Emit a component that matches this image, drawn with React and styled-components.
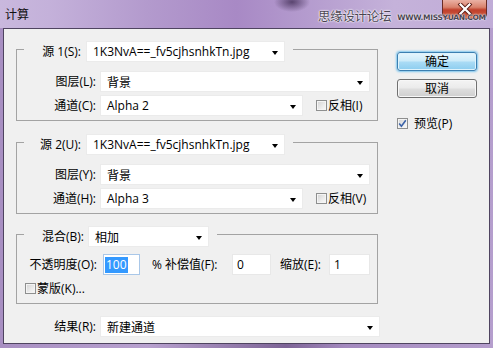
import React from 'react';
import styled, { createGlobalStyle } from 'styled-components';

const Global = createGlobalStyle`
  html, body { margin: 0; padding: 0; }
  body {
    width: 493px; height: 348px; overflow: hidden;
    font-family: "Open Sans", "Noto Sans CJK SC", sans-serif;
    font-size: 12px; color: #000;
  }
  * { box-sizing: border-box; }
`;

const Window = styled.div`
  width: 493px; height: 348px;
  display: flex; flex-direction: column;
  position: relative;
  background: linear-gradient(90deg, #a88fc2 0%, #b8a1cf 30%, #7d6496 58%, #a48abf 70%, #b59ecd 100%);
`;

const TitleBar = styled.header`
  height: 28px; flex: none;
  display: flex; align-items: flex-start;
  position: relative;
  background:
    radial-gradient(18px 10px at 292px 2px, rgba(60,40,80,0.75), rgba(60,40,80,0)),
    linear-gradient(90deg, #c9b8dd 0%, #c4b1da 10%, #b39acd 30%, #a889c5 48%, #b49bce 62%, #c5b2da 80%, #c0acd7 100%);
`;

const Title = styled.div`
  padding: 7px 0 0 5px;
  font-size: 12px; line-height: 16px;
  color: #111;
`;

const WindowControls = styled.div`
  margin-left: auto; margin-right: 6px;
  display: flex;
`;

const CloseBtn = styled.button`
  appearance: none;
  margin: 0; padding: 0;
  width: 45px; height: 19px;
  display: flex; align-items: center; justify-content: center;
  border: 1px solid #6a2c26;
  border-top: 0 none;
  border-radius: 0 0 5px 5px;
  background: #c94a36 linear-gradient(180deg, #eab1a4 0%, #d9826d 40%, #c0402c 55%, #cf5a3e 100%);
`;

const Watermark = styled.div`
  position: absolute; left: 318px; top: 8px;
  display: flex; align-items: center; gap: 6px;
  white-space: nowrap;
  pointer-events: none;
`;

const WatermarkCn = styled.span`
  font-family: "Noto Sans CJK SC", sans-serif;
  font-size: 12.5px; line-height: 16px; letter-spacing: -0.3px;
  color: #4a4452;
  text-shadow: 0 0 1px #fff, 0 0 2px #fff, 0 0 2px #fff;
`;

const WatermarkEn = styled.span`
  font-family: "DejaVu Sans", sans-serif;
  font-weight: bold; font-size: 7.5px; letter-spacing: -0.3px;
  color: #4a4452; margin-top: 2px;
  text-shadow: 0 0 1px #fff, 0 0 2px #fff;
`;

const Content = styled.div`
  flex: 1;
  margin: 0 3px 4px 3px;
  border: 1px solid #4f4460;
  background: #f0f0f0;
  display: flex; align-items: flex-start;
  padding: 20px 0 0 12px;
`;

const LeftCol = styled.div`
  width: 362px; display: flex; flex-direction: column;
`;

const RightCol = styled.div`
  width: 80px; margin-left: 19px; padding-top: 3px;
  display: flex; flex-direction: column;
`;

const Group = styled.div`
  border: 1px solid #a3a3a3;
  display: flex; flex-direction: column;
  padding-bottom: ${p => p.$pb}px;
  margin-top: ${p => p.$mt ?? 0}px;
`;

const GroupHeader = styled.div`
  align-self: flex-start;
  margin: -9px 0 0 7px;
  padding: 0 8px 0 12px;
  background: #f0f0f0;
  display: flex; align-items: center; gap: ${p => p.$gap}px;
  height: 21px;
`;

const Label = styled.span`
  width: ${p => p.$w}px;
  flex: none;
  margin-left: ${p => p.$ml ?? 0}px;
  text-align: ${p => p.$align ?? 'right'};
  white-space: nowrap;
  line-height: 16px;
`;

const Row = styled.div`
  display: flex; align-items: center;
  height: ${p => p.$h ?? 21}px;
  margin-top: ${p => p.$mt}px;
  padding-left: ${p => p.$pl ?? 0}px;
  gap: ${p => p.$gap ?? 4}px;
`;

const SelectBox = styled.div`
  width: ${p => p.$w}px; height: 21px; flex: none;
  background: #fff;
  border: 1px solid #ebebeb;
  display: flex; align-items: center; justify-content: space-between;
  padding: 0 6px 0 6px;
  white-space: nowrap;
`;

const Arrow = styled.span`
  width: 0; height: 0;
  border-left: 3.5px solid transparent;
  border-right: 3.5px solid transparent;
  border-top: 4px solid #000;
  margin-top: 2px;
`;

const Input = styled.div`
  width: ${p => p.$w}px; height: 21px; flex: none;
  margin-left: ${p => p.$ml}px;
  background: #fff;
  border: 1px solid ${p => (p.$focus ? '#a9c7e8' : '#e8e8e8')};
  display: flex; align-items: center;
  padding-left: ${p => (p.$focus ? 1 : 4)}px;
`;

const Selected = styled.span`
  background: #3399ff; color: #fff;
  padding: 0 1px; line-height: 16px;
`;

const CheckWrap = styled.label`
  display: flex; align-items: center; gap: ${p => p.$gap ?? 1}px;
  margin-left: ${p => p.$ml ?? 0}px;
  white-space: nowrap; line-height: 16px;
`;

const Box = styled.span`
  width: 11px; height: 11px; flex: none;
  border: 1px solid #8e8f8f;
  background: linear-gradient(135deg, #d2d2d2 0%, #ececec 60%, #fafafa 100%);
  box-shadow: inset 0 0 0 1px #f4f4f4;
  display: flex; align-items: center; justify-content: center;
`;

const Button = styled.div`
  width: 80px; height: 19px;
  margin-top: ${p => p.$mt ?? 0}px;
  border-radius: 3px;
  display: flex; align-items: center; justify-content: center;
  line-height: 16px;
  border: 1px solid ${p => (p.$primary ? '#3c7fb1' : '#707070')};
  background: ${p => (p.$primary
    ? 'linear-gradient(180deg, #e7f6fd 0%, #cdebf9 45%, #a9dbf5 55%, #8ccdef 100%)'
    : 'linear-gradient(180deg, #f4f4f4 0%, #ebebeb 45%, #dddddd 55%, #cfcfcf 100%)')};
  box-shadow: ${p => (p.$primary ? '0 0 2px 1px #7fc6ee, inset 0 0 0 1px #dff3fc' : 'inset 0 0 0 1px #f7f7f7')};
`;

function Select({ w, children }) {
  return (
    <SelectBox $w={w}>
      <span>{children}</span>
      <Arrow />
    </SelectBox>
  );
}

function Check({ checked, children, ml, gap }) {
  return (
    <CheckWrap $ml={ml} $gap={gap}>
      <Box>
        {checked && (
          <svg width="9" height="9" viewBox="0 0 9 9">
            <path d="M1.2 4.6 L3.4 7.2 L7.8 1.2" fill="none" stroke="#3a62a8" strokeWidth="1.6" />
          </svg>
        )}
      </Box>
      <span>{children}</span>
    </CheckWrap>
  );
}

export default function App() {
  return (
    <Window>
      <Global />
      <TitleBar>
        <Title>计算</Title>
        <WindowControls>
          <CloseBtn type="button" aria-label="关闭">
            <svg width="16" height="12" viewBox="0 0 16 12">
              <path d="M3.5 1.5 L12.5 10.5 M12.5 1.5 L3.5 10.5" stroke="#5a1d16" strokeWidth="4" strokeLinecap="square" />
              <path d="M3.5 1.5 L12.5 10.5 M12.5 1.5 L3.5 10.5" stroke="#ffffff" strokeWidth="2.2" strokeLinecap="square" />
            </svg>
          </CloseBtn>
        </WindowControls>
        <Watermark>
          <WatermarkCn>思缘设计论坛</WatermarkCn>
          <WatermarkEn>WWW.MISSYUAN.COM</WatermarkEn>
        </Watermark>
      </TitleBar>
      <Content>
        <LeftCol>
          <Group $pb={4}>
            <GroupHeader $gap={5}>
              <Label $w={45}>源 1(S):</Label>
              <Select w={199}>1K3NvA==_fv5cjhsnhkTn.jpg</Select>
            </GroupHeader>
            <Row $mt={9}>
              <Label $w={79}>图层(L):</Label>
              <Select w={270}>背景</Select>
            </Row>
            <Row $mt={3}>
              <Label $w={79}>通道(C):</Label>
              <Select w={203}>Alpha 2</Select>
              <Check ml={9}>反相(I)</Check>
            </Row>
          </Group>

          <Group $pb={4} $mt={21}>
            <GroupHeader $gap={5}>
              <Label $w={45}>源 2(U):</Label>
              <Select w={199}>1K3NvA==_fv5cjhsnhkTn.jpg</Select>
            </GroupHeader>
            <Row $mt={9}>
              <Label $w={79}>图层(Y):</Label>
              <Select w={270}>背景</Select>
            </Row>
            <Row $mt={3}>
              <Label $w={79}>通道(H):</Label>
              <Select w={203}>Alpha 3</Select>
              <Check ml={9}>反相(V)</Check>
            </Row>
          </Group>

          <Group $pb={7} $mt={20}>
            <GroupHeader $gap={4}>
              <Label $w={48}>混合(B):</Label>
              <Select w={121}>相加</Select>
            </GroupHeader>
            <Row $mt={7} $gap={0}>
              <Label $w={80}>不透明度(O):</Label>
              <Input $w={37} $ml={6} $focus><Selected>100</Selected></Input>
              <Label $w={13} $ml={12} $align="left">%</Label>
              <Label $w={61} $align="left">补偿值(F):</Label>
              <Input $w={39} $ml={6}>0</Input>
              <Label $w={40} $ml={9} $align="left">缩放(E):</Label>
              <Input $w={41} $ml={9}>1</Input>
            </Row>
            <Row $mt={6} $pl={8} $h={15}>
              <Check>蒙版(K)...</Check>
            </Row>
          </Group>

          <Row $mt={12}>
            <Label $w={80}>结果(R):</Label>
            <Select w={280}>新建通道</Select>
          </Row>
        </LeftCol>

        <RightCol>
          <Button $primary>确定</Button>
          <Button $mt={8}>取消</Button>
          <Row $mt={15} $gap={0}>
            <Check checked gap={6}>预览(P)</Check>
          </Row>
        </RightCol>
      </Content>
    </Window>
  );
}
